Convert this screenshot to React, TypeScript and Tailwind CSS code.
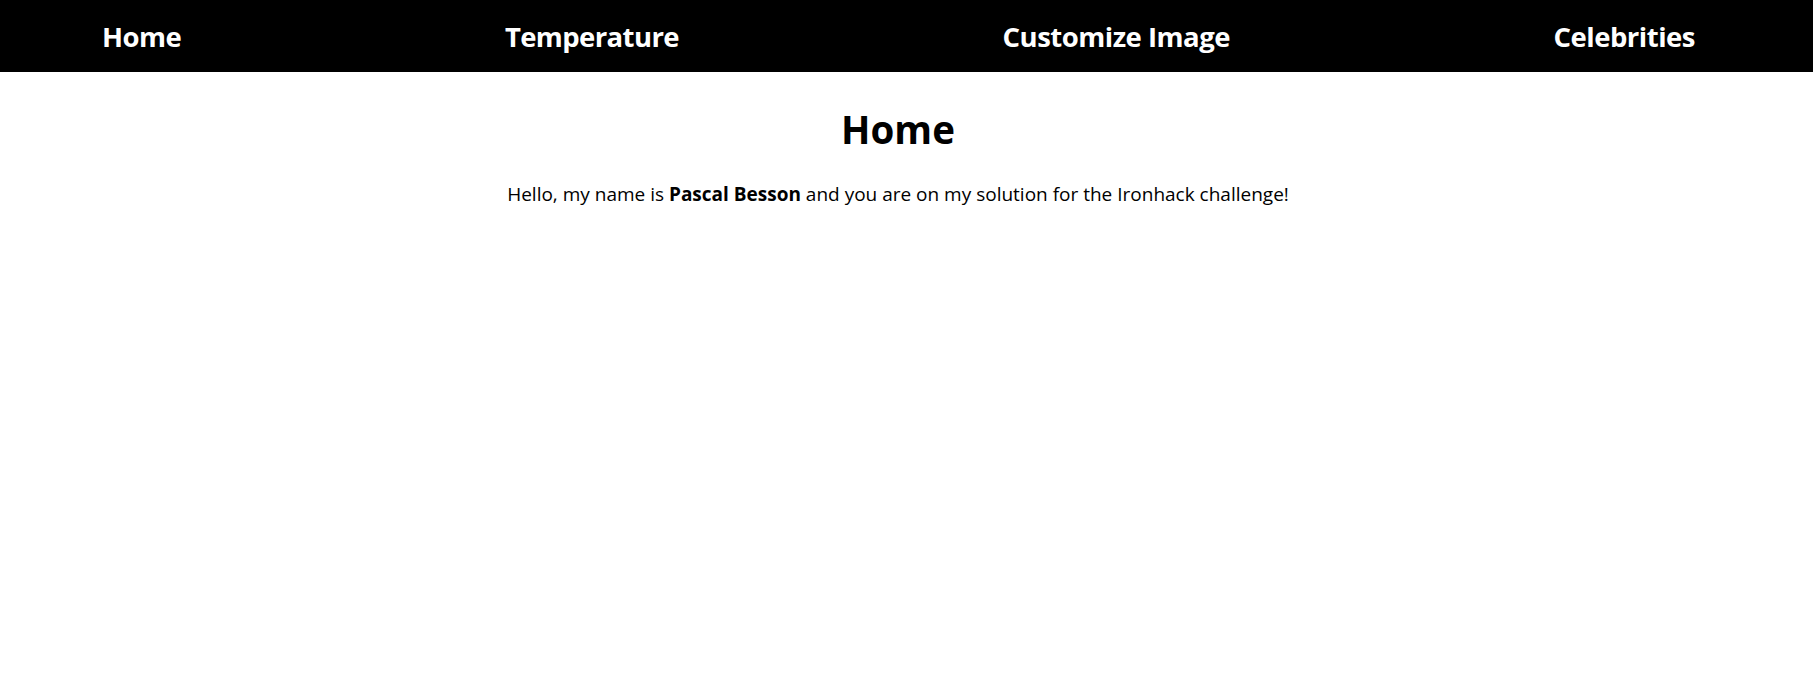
import React from "react";

export default function App() {
  const font = { fontFamily: '"Open Sans", "Noto Sans", sans-serif' };
  return (
    <div className="min-h-[673px] bg-white text-black" style={font}>
      <nav className="flex h-[72px] items-center justify-between bg-black pl-[102px] pr-[118px] pt-[2px] text-white">
        <a className="text-[27.5px] font-bold tracking-[-0.5px]">Home</a>
        <a className="text-[27.5px] font-bold tracking-[-0.6px]">Temperature</a>
        <a className="text-[27.5px] font-bold tracking-[-0.5px]">Customize Image</a>
        <a className="text-[27.5px] font-bold tracking-[-0.5px]">Celebrities</a>
      </nav>
      <main className="flex flex-col items-center pr-[17px]">
        <h1 className="mt-[31px] text-[38.5px] font-bold leading-[52px]">Home</h1>
        <p className="mt-[26px] text-[19px] leading-[26px]">
          Hello, my name is <b>Pascal Besson</b> and you are on my solution for the Ironhack challenge!
        </p>
      </main>
    </div>
  );
}
